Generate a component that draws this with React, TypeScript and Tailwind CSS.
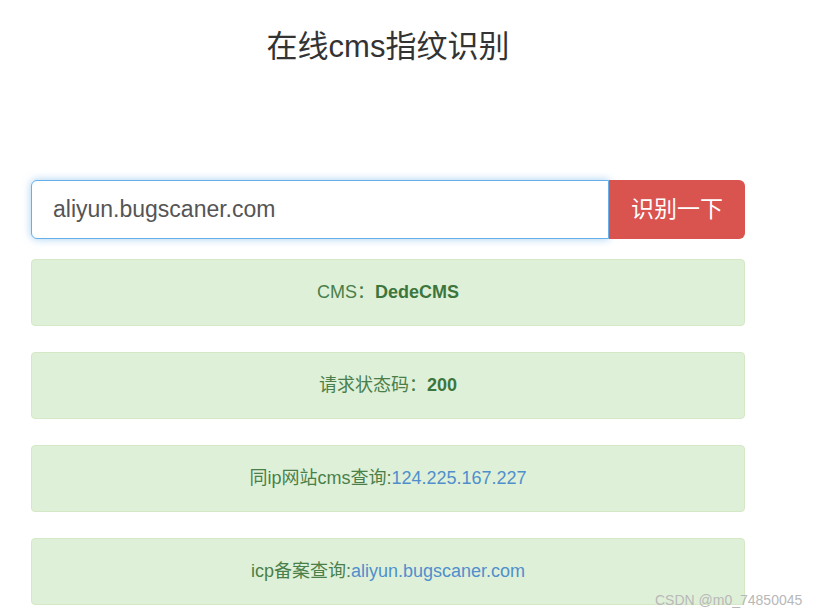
import React from 'react'

const rows = [
  { label: 'CMS：', value: 'DedeCMS', kind: 'bold' },
  { label: '请求状态码：', value: '200', kind: 'bold' },
  { label: '同ip网站cms查询:', value: '124.225.167.227', kind: 'link' },
  { label: 'icp备案查询:', value: 'aliyun.bugscaner.com', kind: 'link' },
]

export default function App() {
  return (
    <div
      className="relative w-[830px] h-[616px] bg-white overflow-hidden"
      style={{ fontFamily: '"Liberation Sans", "Noto Sans CJK SC", sans-serif' }}
    >
      <div className="ml-[31px] w-[714px]">
        <h1 className="mt-[30px] text-center text-[31px] leading-[34px] text-[#333]">在线cms指纹识别</h1>

        <div className="mt-[116px] flex h-[59px]">
          <div className="flex flex-1 items-center rounded-l-[6px] border border-[#66afe9] bg-white pl-[21px] text-[23px] text-[#555] shadow-[0_0_8px_rgba(102,175,233,0.6)]">
            aliyun.bugscaner.com
          </div>
          <button className="w-[136px] rounded-r-[6px] bg-[#d9534f] text-[23px] text-white">识别一下</button>
        </div>

        <div className="mt-[20px] flex flex-col gap-[26px]">
          {rows.map((r) => (
            <div
              key={r.label}
              className="flex h-[67px] items-center justify-center rounded-[4px] border border-[#d6e9c6] bg-[#dff0d8] text-[18px] text-[#4a7f4a]"
            >
              <span>{r.label}</span>
              {r.kind === 'bold' ? (
                <b className="font-bold text-[#3c763d]">{r.value}</b>
              ) : (
                <span className="text-[#4f8fcc]">{r.value}</span>
              )}
            </div>
          ))}
        </div>
      </div>

      <div className="absolute left-[655px] top-[591px] text-[14px] leading-[18px] text-[#b8b8b8]">CSDN @m0_74850045</div>
    </div>
  )
}
